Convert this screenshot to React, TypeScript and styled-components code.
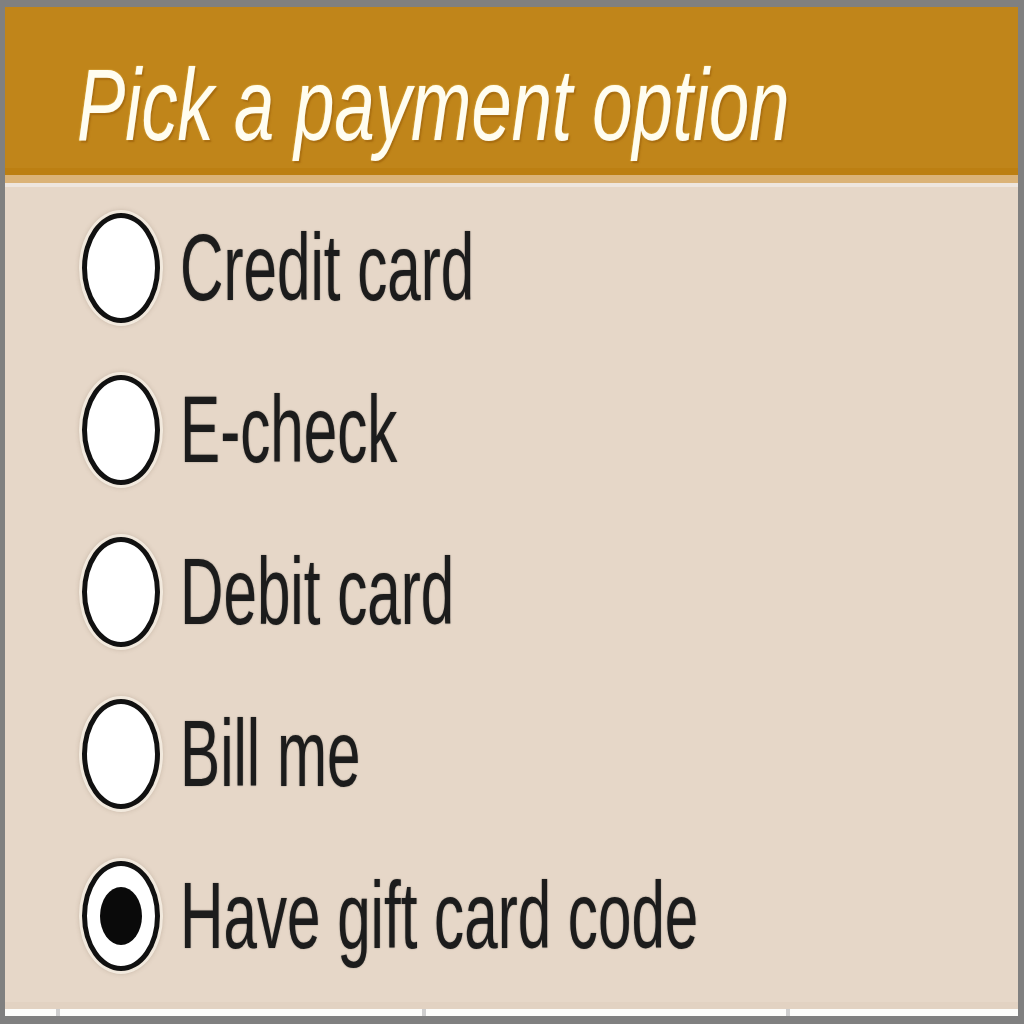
import React from "react";
import styled, { createGlobalStyle } from "styled-components";

const GlobalStyle = createGlobalStyle`
  html, body {
    margin: 0;
    padding: 0;
    background: #808080;
  }
`;

const Frame = styled.div`
  width: 1024px;
  height: 1024px;
  box-sizing: border-box;
  padding: 7px 6px 8px 5px;
  background: #808080;
  display: flex;
`;

const Panel = styled.div`
  flex: 1;
  display: flex;
  flex-direction: column;
  background: #e6d7c8;
  overflow: hidden;
`;

const Header = styled.div`
  height: 168px;
  box-sizing: border-box;
  padding: 47px 0 0 72px;
  background: #c0851a;
  border-bottom: 7px solid #bc7f12;
  flex-shrink: 0;
`;

const Title = styled.h1`
  margin: 0;
  display: inline-block;
  font-family: "Liberation Sans", Arial, sans-serif;
  font-style: italic;
  font-weight: normal;
  font-size: 102px;
  line-height: 102px;
  color: #fffdf0;
  white-space: nowrap;
  transform: scaleX(0.71);
  transform-origin: left center;
  text-shadow: 2px 2px 2px rgba(140, 80, 0, 0.55), 0 0 2px rgba(255, 220, 120, 0.9);
`;

const Stripe = styled.div<{ $color: string; $h: number }>`
  height: ${(p) => p.$h}px;
  background: ${(p) => p.$color};
  flex-shrink: 0;
`;

const OptionList = styled.div`
  display: flex;
  flex-direction: column;
  height: 815px;
  flex-shrink: 0;
`;

const Row = styled.label`
  height: 162px;
  display: flex;
  align-items: center;
  padding-left: 77px;
  gap: 20px;
  cursor: pointer;
`;

const Radio = styled.span<{ $checked?: boolean }>`
  width: 78px;
  height: 110px;
  box-sizing: border-box;
  border-radius: 50%;
  background: #ffffff;
  border: 5px solid #111;
  box-shadow: 0 0 0 3px rgba(255, 250, 240, 0.7), 0 0 4px 3px rgba(120, 100, 80, 0.25);
  display: flex;
  align-items: center;
  justify-content: center;
  flex-shrink: 0;

  &::after {
    content: "";
    display: ${(p) => (p.$checked ? "block" : "none")};
    width: 42px;
    height: 58px;
    border-radius: 50%;
    background: #0a0a0a;
  }
`;

const Label = styled.span`
  display: inline-block;
  font-family: "Liberation Sans", Arial, sans-serif;
  font-size: 94px;
  line-height: 94px;
  color: #1c1c1c;
  white-space: nowrap;
  transform: scaleX(0.64);
  transform-origin: left center;
  text-shadow: 0 0 2px rgba(0, 0, 0, 0.4);
`;

const Footer = styled.div`
  flex: 1;
  display: flex;
  flex-direction: column;
`;

const FooterShade = styled.div`
  height: 7px;
  background: #e2d2c2;
`;

const FooterBar = styled.div`
  flex: 1;
  background: #fdfdfb;
  display: grid;
  grid-template-columns: 51px 4px 362px 4px 360px 4px 1fr;
`;

const Tick = styled.span`
  background: #cfcfcf;
`;

const options = ["Credit card", "E-check", "Debit card", "Bill me", "Have gift card code"];

export default function App() {
  const [selected, setSelected] = React.useState(4);
  return (
    <>
      <GlobalStyle />
      <Frame>
        <Panel>
          <Header>
            <Title>Pick a payment option</Title>
          </Header>
          <Stripe $color="#dbb378" $h={8} />
          <Stripe $color="#eee6df" $h={4} />
          <OptionList>
            {options.map((o, i) => (
              <Row key={o} onClick={() => setSelected(i)}>
                <Radio $checked={selected === i} />
                <Label>{o}</Label>
              </Row>
            ))}
          </OptionList>
          <Footer>
            <FooterShade />
            <FooterBar>
              <span />
              <Tick />
              <span />
              <Tick />
              <span />
              <Tick />
              <span />
            </FooterBar>
          </Footer>
        </Panel>
      </Frame>
    </>
  );
}
